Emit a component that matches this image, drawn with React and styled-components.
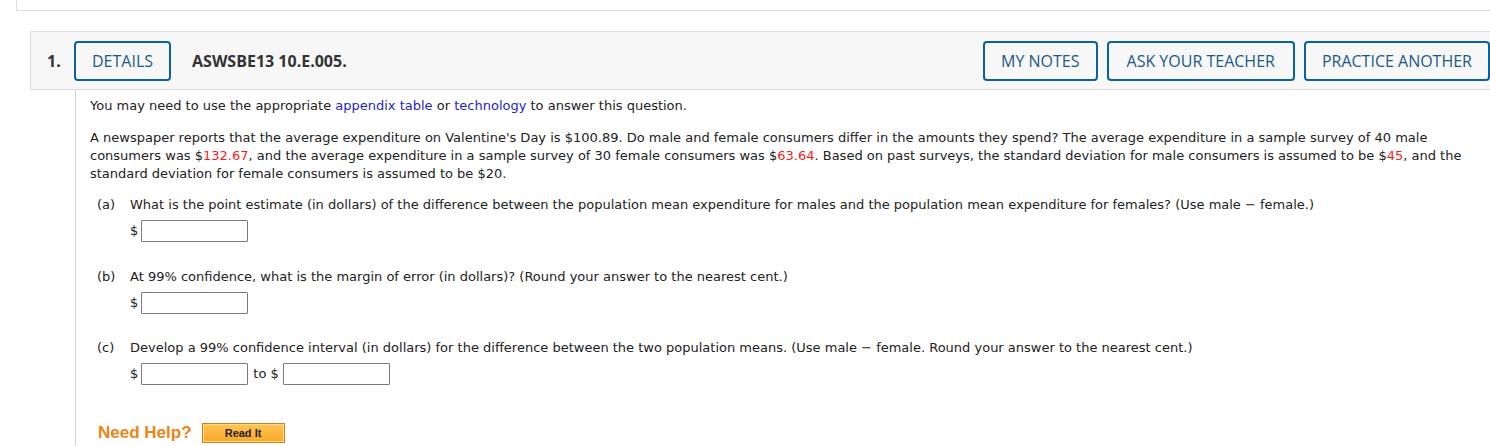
import React from 'react';
import styled, { createGlobalStyle } from 'styled-components';

const GlobalStyle = createGlobalStyle`
  html, body {
    margin: 0;
    padding: 0;
    background: #fff;
    overflow: hidden;
  }
`;

const Page = styled.div`
  width: 1490px;
  height: 446px;
  overflow: hidden;
`;

const PrevCard = styled.div`
  margin-left: 16px;
  height: 10px;
  border-left: 1px solid #dddddd;
  border-bottom: 1px solid #dddddd;
`;

const Header = styled.div`
  margin: 20px 0 0 30px;
  height: 57px;
  display: flex;
  align-items: center;
  background: #f7f7f7;
  border: 1px solid #dddddd;
  border-right: none;
  padding-left: 16px;
  font-family: 'Open Sans', 'Liberation Sans', sans-serif;
`;

const Number = styled.span`
  font-size: 16px;
  font-weight: 700;
  color: #333;
  width: 27px;
`;

const Code = styled.span`
  font-size: 16px;
  font-weight: 700;
  color: #333;
  margin-left: 21px;
  flex: 1;
`;

const HeadButton = styled.button`
  height: 40px;
  padding: 0 ${p => p.$pad || 16}px;
  margin-left: ${p => p.$gap || 0}px;
  border: 2px solid #0b6299;
  border-radius: 4px;
  background: transparent;
  color: #1b5a88;
  font-family: 'Open Sans', 'Liberation Sans', sans-serif;
  font-size: 16px;
  text-transform: uppercase;
  box-sizing: border-box;
  white-space: nowrap;
`;

const Body = styled.div`
  margin-left: 75px;
  border-left: 1px solid #cfcfcf;
  padding: 7px 0 0 14px;
  height: 400px;
  color: #222;
  font-family: 'DejaVu Sans', Verdana, sans-serif;
  font-size: 13px;
  line-height: 18px;
`;

const Para = styled.p`
  margin: 0 0 ${p => p.$mb || 0}px;
  padding-right: 12px;
`;

const Link = styled.span`
  color: #1f1fc9;
`;

const Red = styled.span`
  color: #f01e1e;
`;

const Part = styled.div`
  margin-left: 7px;
  margin-bottom: ${p => p.$mb || 0}px;
`;

const PartRow = styled.div`
  display: flex;
`;

const Label = styled.span`
  width: 33px;
  flex: none;
`;

const AnswerRow = styled.div`
  display: flex;
  align-items: center;
  margin: 6px 0 0 33px;
  height: 22px;
`;

const Dollar = styled.span`
  margin-right: 3px;
`;

const Input = styled.div`
  width: 105px;
  height: 20px;
  border: 1px solid #7a7a7a;
  border-radius: 1px;
  background: #fff;
`;

const To = styled.span`
  margin: 0 4px 0 5px;
`;

const HelpRow = styled.div`
  display: flex;
  align-items: center;
  margin-left: 8px;
`;

const NeedHelp = styled.span`
  font-family: 'Liberation Sans', Arial, sans-serif;
  font-weight: 700;
  font-size: 17px;
  color: #ec8416;
  margin-right: 10px;
`;

const ReadIt = styled.button`
  width: 83px;
  height: 20px;
  padding: 0;
  border: 1px solid #d0801c;
  background: linear-gradient(#ffc457, #f9a825);
  box-shadow: inset 0 0 0 1px #ffd98a;
  font-family: 'Liberation Sans', Arial, sans-serif;
  font-weight: 700;
  font-size: 11px;
  color: #222;
`;

export default function App() {
  return (
    <Page>
      <GlobalStyle />
      <PrevCard />
      <Header>
        <Number>1.</Number>
        <HeadButton>Details</HeadButton>
        <Code>ASWSBE13 10.E.005.</Code>
        <HeadButton>My Notes</HeadButton>
        <HeadButton $gap={9} $pad={18}>Ask Your Teacher</HeadButton>
        <HeadButton $gap={9}>Practice Another</HeadButton>
      </Header>
      <Body>
        <Para $mb={14}>
          You may need to use the appropriate <Link>appendix table</Link> or <Link>technology</Link> to answer this question.
        </Para>
        <Para $mb={13}>
          A newspaper reports that the average expenditure on Valentine's Day is $100.89. Do male and female consumers differ in the amounts they spend? The average expenditure in a sample survey of 40 male consumers was $<Red>132.67</Red>, and the average expenditure in a sample survey of 30 female consumers was $<Red>63.64</Red>. Based on past surveys, the standard deviation for male consumers is assumed to be $<Red>45</Red>, and the standard deviation for female consumers is assumed to be $20.
        </Para>
        <Part $mb={26}>
          <PartRow>
            <Label>(a)</Label>
            <span>What is the point estimate (in dollars) of the difference between the population mean expenditure for males and the population mean expenditure for females? (Use male − female.)</span>
          </PartRow>
          <AnswerRow>
            <Dollar>$</Dollar>
            <Input />
          </AnswerRow>
        </Part>
        <Part $mb={25}>
          <PartRow>
            <Label>(b)</Label>
            <span>At 99% confidence, what is the margin of error (in dollars)? (Round your answer to the nearest cent.)</span>
          </PartRow>
          <AnswerRow>
            <Dollar>$</Dollar>
            <Input />
          </AnswerRow>
        </Part>
        <Part $mb={38}>
          <PartRow>
            <Label>(c)</Label>
            <span>Develop a 99% confidence interval (in dollars) for the difference between the two population means. (Use male − female. Round your answer to the nearest cent.)</span>
          </PartRow>
          <AnswerRow>
            <Dollar>$</Dollar>
            <Input />
            <To>to $</To>
            <Input />
          </AnswerRow>
        </Part>
        <HelpRow>
          <NeedHelp>Need Help?</NeedHelp>
          <ReadIt>Read It</ReadIt>
        </HelpRow>
      </Body>
    </Page>
  );
}
